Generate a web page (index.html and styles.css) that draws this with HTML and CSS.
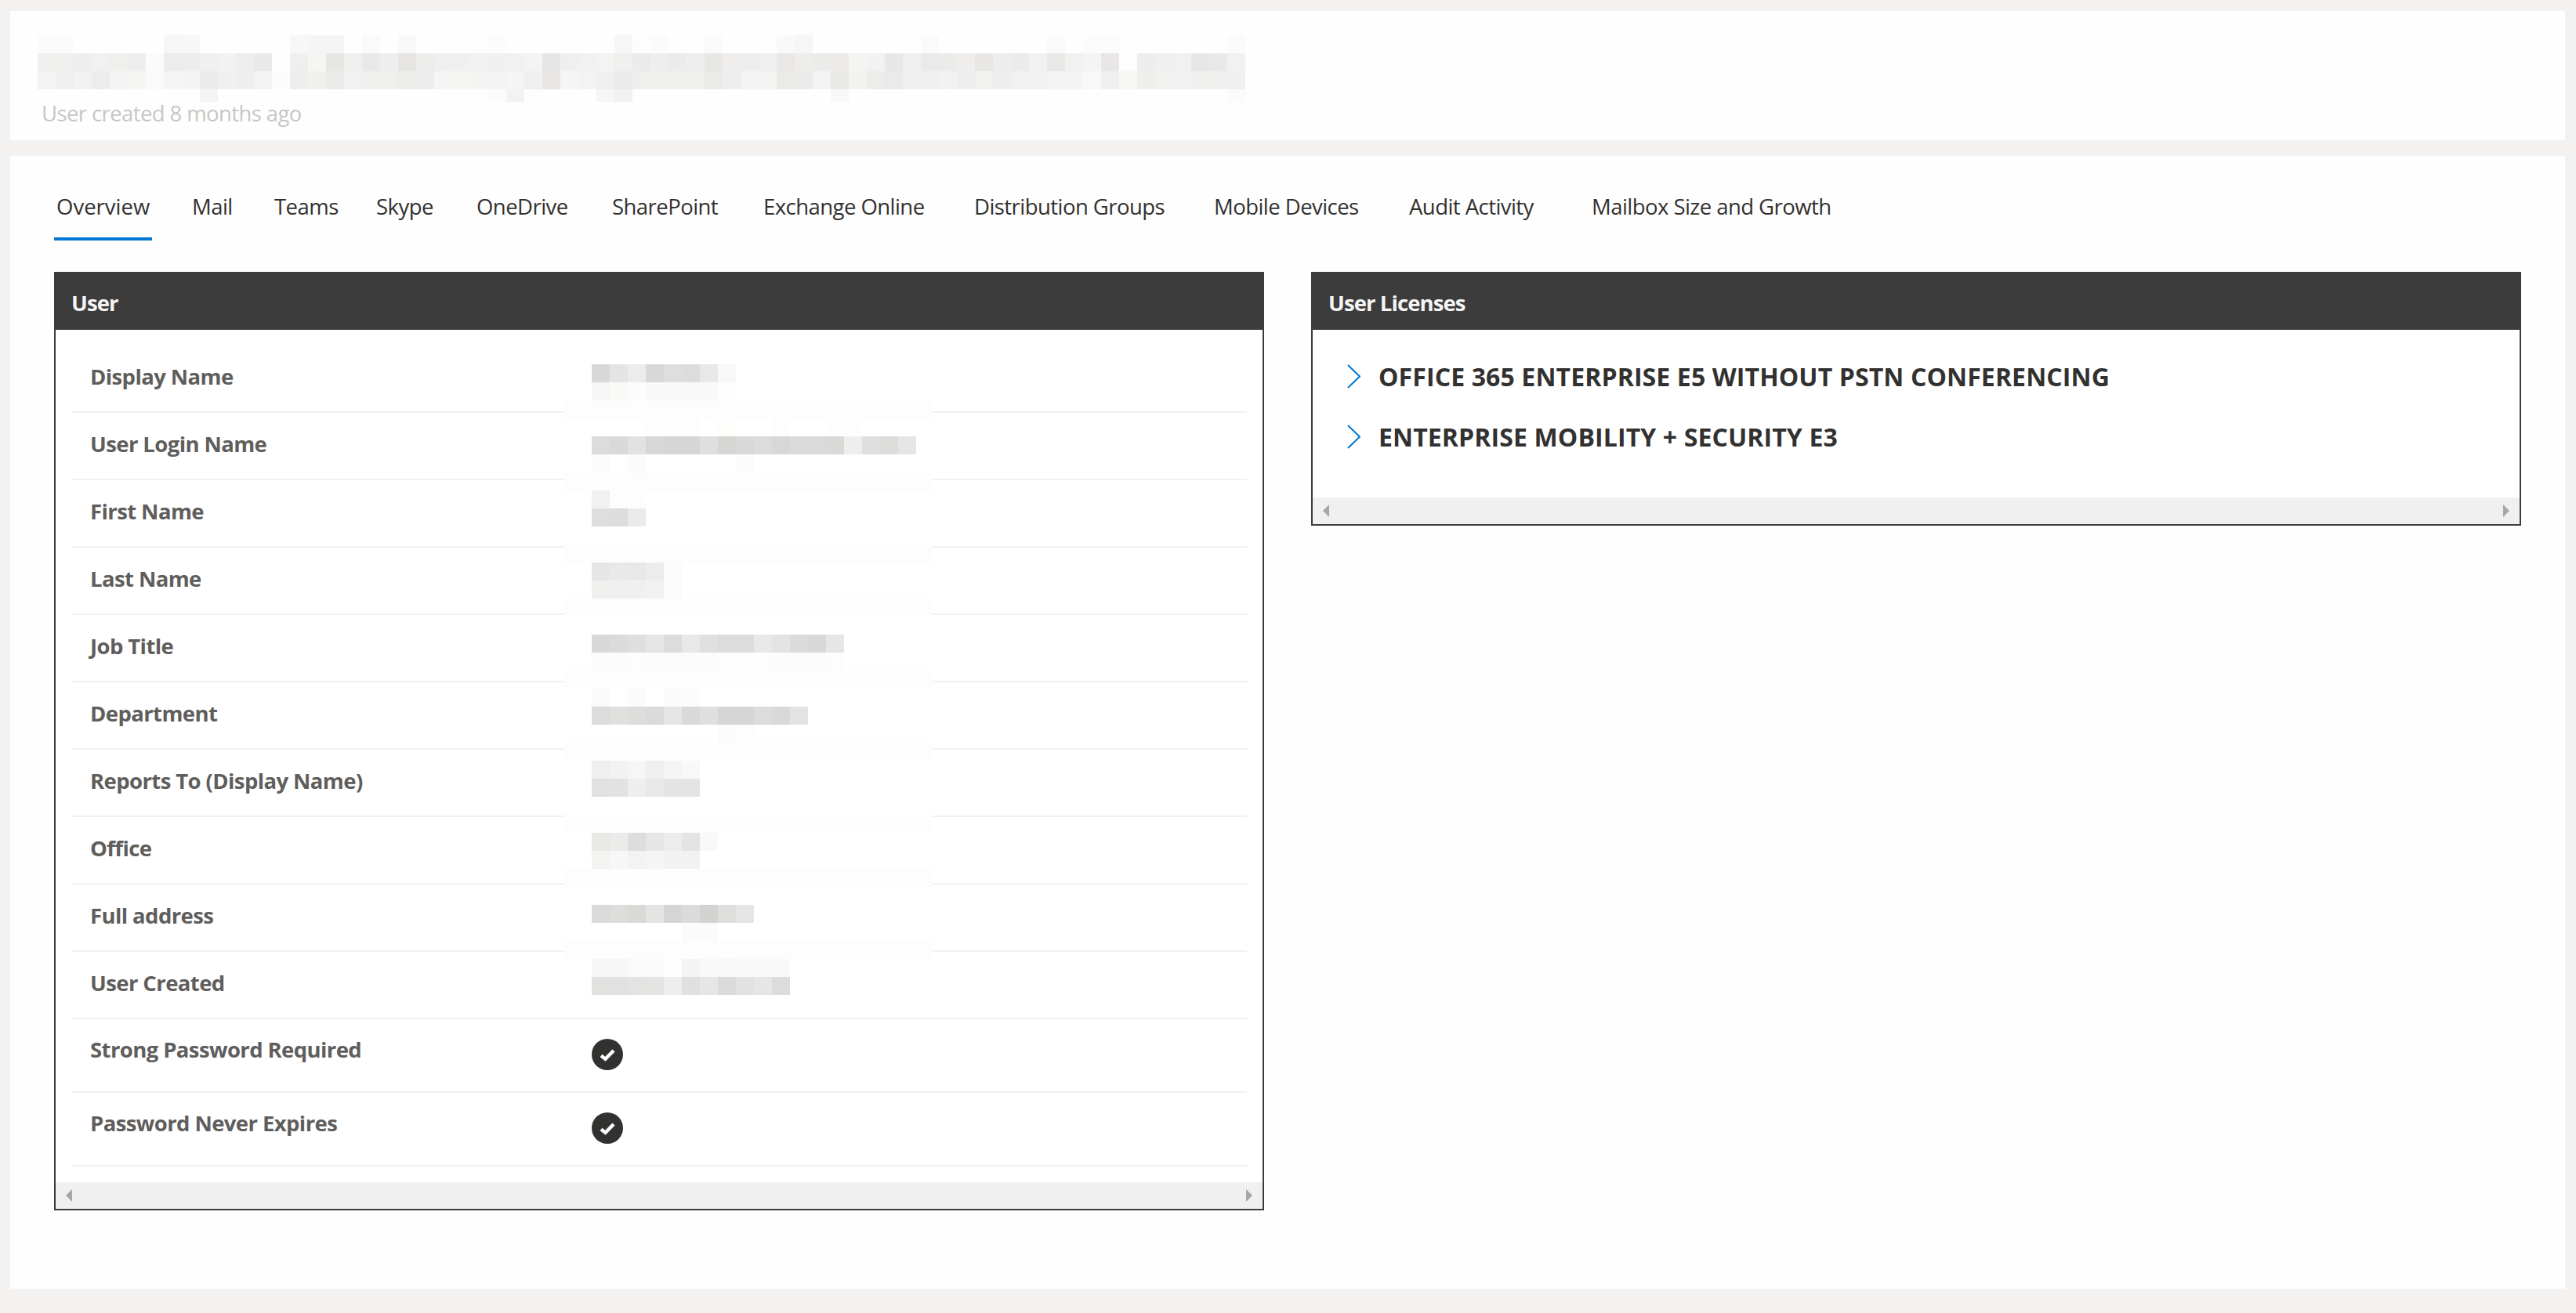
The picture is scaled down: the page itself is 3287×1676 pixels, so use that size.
FILE: index.html
```html
<!DOCTYPE html>
<html lang="en">
<head>
<meta charset="utf-8">
<title>User Overview</title>
<link rel="stylesheet" href="styles.css">
</head>
<body>
<header class="card user-head">
<svg class="mosaic title-mosaic" viewBox="0 0 1541 85" aria-label="Redacted user name">
<g>
<rect x="0" fill="#fbfbfb"/><rect x="23" fill="#fbfbfb"/><rect x="161" fill="#f6f6f6"/><rect x="184" fill="#f7f7f7"/><rect x="322" fill="#f7f7f7"/><rect x="345" fill="#f5f5f5"/><rect x="368" fill="#f5f5f5"/><rect x="414" fill="#fafafa"/><rect x="460" fill="#f9f9f9"/><rect x="552" fill="#fdfdfd"/><rect x="575" fill="#fcfcfc"/><rect x="736" fill="#f6f6f6"/><rect x="759" fill="#fdfdfd"/><rect x="782" fill="#fbfbfb"/><rect x="851" fill="#fafafa"/><rect x="943" fill="#f9f9f9"/><rect x="966" fill="#f6f6f6"/><rect x="1127" fill="#fafafa"/><rect x="1288" fill="#fafaf8"/><rect x="1334" fill="#fcfcfc"/><rect x="1357" fill="#fcfcfc"/><rect x="1518" fill="#fbfbfb"/>
</g>
<g transform="translate(0 23)">
<rect x="0" fill="#efefed"/><rect x="23" fill="#f0f0ee"/><rect x="46" fill="#eeeeee"/><rect x="69" fill="#f1f1f1"/><rect x="92" fill="#efefed"/><rect x="115" fill="#eeeeee"/><rect x="138" fill="#fbfbfb"/><rect x="161" fill="#ececea"/><rect x="184" fill="#ededed"/><rect x="207" fill="#f0f0f0"/><rect x="230" fill="#f2f2f2"/><rect x="253" fill="#eeeeec"/><rect x="276" fill="#e9e9e9"/><rect x="322" fill="#f0efed"/><rect x="345" fill="#f5f5f3"/><rect x="368" fill="#e7e6e4"/><rect x="391" fill="#f0f0ee"/><rect x="414" fill="#e9e9e9"/><rect x="437" fill="#eeeeee"/><rect x="460" fill="#e6e5e3"/><rect x="483" fill="#ededeb"/><rect x="506" fill="#efefef"/><rect x="529" fill="#f0f0f0"/><rect x="552" fill="#f2f2f0"/><rect x="575" fill="#f0f0f0"/><rect x="598" fill="#f1f1ef"/><rect x="621" fill="#f4f4f4"/><rect x="644" fill="#e6e6e6"/><rect x="667" fill="#efefef"/><rect x="690" fill="#f1f1f1"/><rect x="713" fill="#f3f3f1"/><rect x="736" fill="#f0f0ee"/><rect x="759" fill="#ebebeb"/><rect x="782" fill="#eeeeee"/><rect x="805" fill="#ebebe9"/><rect x="828" fill="#eeeeee"/><rect x="851" fill="#e8e7e5"/><rect x="874" fill="#efeeec"/><rect x="897" fill="#eeeeee"/><rect x="920" fill="#f0f0f0"/><rect x="943" fill="#e9e8e6"/><rect x="966" fill="#eeedeb"/><rect x="989" fill="#ebebe9"/><rect x="1012" fill="#ecebe9"/><rect x="1035" fill="#f4f4f2"/><rect x="1058" fill="#f2f2f2"/><rect x="1081" fill="#e7e7e7"/><rect x="1104" fill="#efefed"/><rect x="1127" fill="#eaeaea"/><rect x="1150" fill="#ebebe9"/><rect x="1173" fill="#efeeec"/><rect x="1196" fill="#e8e7e5"/><rect x="1219" fill="#ededed"/><rect x="1242" fill="#ecebe9"/><rect x="1265" fill="#f1f1f1"/><rect x="1288" fill="#e8e8e6"/><rect x="1311" fill="#f1f1ef"/><rect x="1334" fill="#f4f4f4"/><rect x="1357" fill="#e8e7e5"/><rect x="1380" fill="#fdfdfd"/><rect x="1403" fill="#ededed"/><rect x="1426" fill="#f0f0f0"/><rect x="1449" fill="#f1f1ef"/><rect x="1472" fill="#e7e7e7"/><rect x="1495" fill="#e9e9e7"/><rect x="1518" fill="#f1f1f1"/>
</g>
<g transform="translate(0 46)">
<rect x="0" fill="#f3f3f1"/><rect x="23" fill="#efefef"/><rect x="46" fill="#f2f2f0"/><rect x="69" fill="#ececec"/><rect x="92" fill="#f4f4f4"/><rect x="115" fill="#f5f5f3"/><rect x="138" fill="#fafafa"/><rect x="161" fill="#f5f5f3"/><rect x="184" fill="#f4f4f4"/><rect x="207" fill="#ebebe9"/><rect x="230" fill="#f0f0f0"/><rect x="253" fill="#eeeeee"/><rect x="276" fill="#f3f3f3"/><rect x="299" fill="#fcfcfc"/><rect x="322" fill="#eeeeec"/><rect x="345" fill="#f0f0ee"/><rect x="368" fill="#ebebe9"/><rect x="391" fill="#f1f1f1"/><rect x="414" fill="#f0f0ee"/><rect x="437" fill="#efefed"/><rect x="460" fill="#ededeb"/><rect x="483" fill="#ededed"/><rect x="506" fill="#f5f5f3"/><rect x="529" fill="#f5f5f3"/><rect x="552" fill="#f4f4f2"/><rect x="575" fill="#f3f3f3"/><rect x="598" fill="#f5f5f3"/><rect x="621" fill="#efefef"/><rect x="644" fill="#e8e7e5"/><rect x="667" fill="#f5f5f5"/><rect x="690" fill="#f3f3f3"/><rect x="713" fill="#efefef"/><rect x="736" fill="#ebebeb"/><rect x="759" fill="#efefed"/><rect x="782" fill="#f0f0ee"/><rect x="805" fill="#f0f0ee"/><rect x="828" fill="#f0f0ee"/><rect x="851" fill="#ebebe9"/><rect x="874" fill="#eeeeee"/><rect x="897" fill="#f4f4f4"/><rect x="920" fill="#f4f4f2"/><rect x="943" fill="#ebeae8"/><rect x="966" fill="#ebebe9"/><rect x="989" fill="#f3f3f3"/><rect x="1012" fill="#e9e9e7"/><rect x="1035" fill="#f2f2f0"/><rect x="1058" fill="#edecea"/><rect x="1081" fill="#eaeaea"/><rect x="1104" fill="#f0f0f0"/><rect x="1127" fill="#f0f0f0"/><rect x="1150" fill="#f2f2f2"/><rect x="1173" fill="#eeeeee"/><rect x="1196" fill="#f1f1ef"/><rect x="1219" fill="#eeeeee"/><rect x="1242" fill="#f1f1ef"/><rect x="1265" fill="#f1f1f1"/><rect x="1288" fill="#f4f4f4"/><rect x="1311" fill="#f4f4f4"/><rect x="1334" fill="#f8f8f8"/><rect x="1357" fill="#efefef"/><rect x="1380" fill="#f7f7f5"/><rect x="1403" fill="#efeeec"/><rect x="1426" fill="#f1f1ef"/><rect x="1449" fill="#f1f1f1"/><rect x="1472" fill="#f0f0ee"/><rect x="1495" fill="#f0f0ee"/><rect x="1518" fill="#f0f0f0"/>
</g>
<g transform="translate(0 69)">
<rect x="184" fill="#fdfdfd"/><rect x="207" fill="#f4f4f4"/><rect x="552" fill="#fdfdfd"/><rect x="575" fill="#fbfbfb"/><rect x="598" fill="#f3f3f3"/><rect x="621" fill="#fdfdfd"/><rect x="713" fill="#f6f6f4"/><rect x="736" fill="#f1f1f1"/><rect x="1012" fill="#f8f8f8"/><rect x="1518" fill="#fbfbfb"/>
</g>
</svg>
<p class="user-age">User created 8 months ago</p>
</header>

<main class="card user-body">
<nav class="tabs">
<a class="tab tab-active">Overview</a>
<a class="tab">Mail</a>
<a class="tab">Teams</a>
<a class="tab">Skype</a>
<a class="tab">OneDrive</a>
<a class="tab">SharePoint</a>
<a class="tab">Exchange Online</a>
<a class="tab">Distribution Groups</a>
<a class="tab">Mobile Devices</a>
<a class="tab">Audit Activity</a>
<a class="tab">Mailbox Size and Growth</a>
</nav>

<div class="panels">
<section class="panel panel-user">
<h2 class="panel-title">User</h2>
<div class="panel-scroll">
<dl class="fields">
<div class="field"><dt>Display Name</dt><dd></dd></div>
<div class="field"><dt>User Login Name</dt><dd></dd></div>
<div class="field"><dt>First Name</dt><dd></dd></div>
<div class="field"><dt>Last Name</dt><dd></dd></div>
<div class="field"><dt>Job Title</dt><dd></dd></div>
<div class="field"><dt>Department</dt><dd></dd></div>
<div class="field"><dt>Reports To (Display Name)</dt><dd></dd></div>
<div class="field"><dt>Office</dt><dd></dd></div>
<div class="field"><dt>Full address</dt><dd></dd></div>
<div class="field"><dt>User Created</dt><dd></dd></div>
<div class="field field-flag"><dt>Strong Password Required</dt><dd>
<svg class="check" viewBox="0 0 40 40"><circle cx="20" cy="20" r="20"/><path d="M12 21.500l5.500 4.300L28 15"/></svg>
</dd></div>
<div class="field field-flag"><dt>Password Never Expires</dt><dd>
<svg class="check" viewBox="0 0 40 40"><circle cx="20" cy="20" r="20"/><path d="M12 21.500l5.500 4.300L28 15"/></svg>
</dd></div>
</dl>
</div>
<div class="scrollbar"><span class="arrow arrow-left"></span><span class="arrow arrow-right"></span></div>

<svg class="mosaic field-mosaic" viewBox="0 0 470 805" aria-label="Redacted values">
<g transform="translate(0 46)"><rect class="band"/></g>
<g transform="translate(0 138)"><rect class="band"/></g>
<g transform="translate(0 230)"><rect class="band"/></g>
<g transform="translate(0 299)"><rect class="band"/></g>
<g transform="translate(0 391)"><rect class="band"/></g>
<g transform="translate(0 483)"><rect class="band"/></g>
<g transform="translate(0 575)"><rect class="band"/></g>
<g transform="translate(0 644)"><rect class="band"/></g>
<g transform="translate(0 736)"><rect class="band"/></g>

<g transform="translate(35 0)"><rect x="0" fill="#d8d8d8"/><rect x="23" fill="#e4e4e4"/><rect x="46" fill="#ececec"/><rect x="69" fill="#d8d8d8"/><rect x="92" fill="#dededc"/><rect x="115" fill="#dcdcdc"/><rect x="138" fill="#e8e8e6"/><rect x="161" fill="#f8f8f8"/></g>
<g transform="translate(35 23)"><rect x="0" fill="#f6f6f6"/><rect x="23" fill="#f9f9f7"/><rect x="46" fill="#fcfcfc"/><rect x="69" fill="#f9f9f9"/><rect x="92" fill="#f9f9f9"/><rect x="115" fill="#f9f9f9"/><rect x="138" fill="#f9f9f9"/><rect x="161" fill="#fdfdfd"/></g>

<g transform="translate(35 69)"><rect x="69" fill="#fdfdfd"/><rect x="92" fill="#fdfdfd"/><rect x="115" fill="#fdfdfd"/><rect x="161" fill="#fdfdfb"/><rect x="230" fill="#fdfdfd"/><rect x="299" fill="#fdfdfd"/><rect x="322" fill="#fdfdfd"/></g>
<g transform="translate(35 92)"><rect x="0" fill="#dcdcdc"/><rect x="23" fill="#d9d9d9"/><rect x="46" fill="#e2e2e2"/><rect x="69" fill="#d7d7d7"/><rect x="92" fill="#d6d6d6"/><rect x="115" fill="#d6d6d6"/><rect x="138" fill="#dfdfdf"/><rect x="161" fill="#d6d6d4"/><rect x="184" fill="#d9d9d9"/><rect x="207" fill="#dcdcdc"/><rect x="230" fill="#d7d7d5"/><rect x="253" fill="#dadada"/><rect x="276" fill="#dadada"/><rect x="299" fill="#d9d9d7"/><rect x="322" fill="#eeeeec"/><rect x="345" fill="#dfdfdf"/><rect x="368" fill="#dcdcda"/><rect x="391" fill="#e5e5e5"/></g>
<g transform="translate(35 115)"><rect x="0" fill="#fcfcfc"/><rect x="23" fill="#ffffff"/><rect x="46" fill="#fbfbfb"/><rect x="184" fill="#fcfcfc"/></g>

<g transform="translate(35 161)"><rect x="0" fill="#f1f1f1"/><rect x="23" fill="#fdfdfd"/><rect x="46" fill="#fdfdfd"/></g>
<g transform="translate(35 184)"><rect x="0" fill="#dedede"/><rect x="23" fill="#dddddd"/><rect x="46" fill="#ebebe9"/></g>

<g transform="translate(35 253)"><rect x="0" fill="#e6e6e6"/><rect x="23" fill="#e9e9e9"/><rect x="46" fill="#e8e8e6"/><rect x="69" fill="#ececec"/><rect x="92" fill="#fcfcfa"/></g>
<g transform="translate(35 276)"><rect x="0" fill="#f0f0ee"/><rect x="23" fill="#f0f0f0"/><rect x="46" fill="#f0f0f0"/><rect x="69" fill="#f2f2f2"/><rect x="92" fill="#fcfcfc"/></g>

<g transform="translate(35 345)"><rect x="0" fill="#d8d8d8"/><rect x="23" fill="#dbdbdb"/><rect x="46" fill="#dfdfdf"/><rect x="69" fill="#e5e5e3"/><rect x="92" fill="#dcdcdc"/><rect x="115" fill="#e8e8e8"/><rect x="138" fill="#e0e0e0"/><rect x="161" fill="#dcdcdc"/><rect x="184" fill="#dcdcdc"/><rect x="207" fill="#e8e8e6"/><rect x="230" fill="#e3e3e3"/><rect x="253" fill="#dbdbdb"/><rect x="276" fill="#d8d8d8"/><rect x="299" fill="#e6e6e6"/></g>
<g transform="translate(35 368)"><rect x="0" fill="#fcfcfc"/><rect x="23" fill="#fcfcfc"/><rect x="46" fill="#fdfdfd"/><rect x="69" fill="#fcfcfc"/><rect x="92" fill="#fcfcfc"/><rect x="115" fill="#fcfcfc"/><rect x="138" fill="#fcfcfc"/><rect x="161" fill="#fdfdfd"/><rect x="184" fill="#fdfdfd"/><rect x="207" fill="#fdfdfd"/><rect x="230" fill="#fcfcfc"/><rect x="253" fill="#fcfcfc"/><rect x="276" fill="#fcfcfc"/><rect x="299" fill="#fdfdfd"/></g>

<g transform="translate(35 414)"><rect x="0" fill="#fafafa"/><rect x="23" fill="#ffffff"/><rect x="46" fill="#fbfbfb"/><rect x="69" fill="#ffffff"/><rect x="92" fill="#fbfbfb"/><rect x="115" fill="#fcfcfc"/></g>
<g transform="translate(35 437)"><rect x="0" fill="#dcdcdc"/><rect x="23" fill="#e0e0de"/><rect x="46" fill="#dddddb"/><rect x="69" fill="#dadada"/><rect x="92" fill="#e5e5e5"/><rect x="115" fill="#d9d9d9"/><rect x="138" fill="#dfdfdd"/><rect x="161" fill="#d6d6d6"/><rect x="184" fill="#d6d6d6"/><rect x="207" fill="#dcdcdc"/><rect x="230" fill="#d9d9d9"/><rect x="253" fill="#e3e3e3"/></g>
<g transform="translate(35 460)"><rect x="161" fill="#fcfcfc"/><rect x="184" fill="#fdfdfd"/></g>

<g transform="translate(35 506)"><rect x="0" fill="#efefef"/><rect x="23" fill="#f2f2f2"/><rect x="46" fill="#f6f6f6"/><rect x="69" fill="#efefef"/><rect x="92" fill="#f5f5f5"/><rect x="115" fill="#f8f8f8"/></g>
<g transform="translate(35 529)"><rect x="0" fill="#e1e1e1"/><rect x="23" fill="#e2e2e2"/><rect x="46" fill="#eeeeee"/><rect x="69" fill="#e9e9e7"/><rect x="92" fill="#e4e4e4"/><rect x="115" fill="#e4e4e4"/></g>

<g transform="translate(35 598)"><rect x="0" fill="#e8e8e6"/><rect x="23" fill="#ebebe9"/><rect x="46" fill="#dddddd"/><rect x="69" fill="#e6e6e4"/><rect x="92" fill="#ececec"/><rect x="115" fill="#e4e4e4"/><rect x="138" fill="#f9f9f9"/></g>
<g transform="translate(35 621)"><rect x="0" fill="#f3f3f1"/><rect x="23" fill="#f7f7f7"/><rect x="46" fill="#f3f3f3"/><rect x="69" fill="#f5f5f3"/><rect x="92" fill="#f2f2f2"/><rect x="115" fill="#f2f2f2"/></g>

<g transform="translate(35 690)"><rect x="0" fill="#dadada"/><rect x="23" fill="#dddddb"/><rect x="46" fill="#d9d9d7"/><rect x="69" fill="#e4e4e2"/><rect x="92" fill="#d5d5d5"/><rect x="115" fill="#dbdbdb"/><rect x="138" fill="#d3d3d1"/><rect x="161" fill="#dededc"/><rect x="184" fill="#e6e6e6"/></g>
<g transform="translate(35 713)"><rect x="115" fill="#fbfbfb"/><rect x="138" fill="#fbfbfb"/></g>

<g transform="translate(35 759)"><rect x="0" fill="#f6f6f6"/><rect x="23" fill="#f6f6f6"/><rect x="46" fill="#fafafa"/><rect x="69" fill="#fafafa"/><rect x="92" fill="#fdfdfd"/><rect x="115" fill="#f4f4f2"/><rect x="138" fill="#f9f9f9"/><rect x="161" fill="#f8f8f8"/><rect x="184" fill="#f9f9f9"/><rect x="207" fill="#f9f9f9"/><rect x="230" fill="#f9f9f9"/></g>
<g transform="translate(35 782)"><rect x="0" fill="#e1e1df"/><rect x="23" fill="#e1e1e1"/><rect x="46" fill="#e3e3e1"/><rect x="69" fill="#e4e4e2"/><rect x="92" fill="#eeeeee"/><rect x="115" fill="#e0e0de"/><rect x="138" fill="#e6e6e6"/><rect x="161" fill="#dadada"/><rect x="184" fill="#e2e2e2"/><rect x="207" fill="#e6e6e6"/><rect x="230" fill="#dcdcdc"/></g>
</svg>
</section>

<section class="panel panel-licenses">
<h2 class="panel-title">User Licenses</h2>
<div class="panel-scroll">
<ul class="licenses">
<li class="license"><svg class="chevron" viewBox="0 0 17 31"><path d="M1 1l15 14.500L1 30"/></svg>OFFICE 365 ENTERPRISE E5 WITHOUT PSTN CONFERENCING</li>
<li class="license"><svg class="chevron" viewBox="0 0 17 31"><path d="M1 1l15 14.500L1 30"/></svg>ENTERPRISE MOBILITY + SECURITY E3</li>
</ul>
</div>
<div class="scrollbar"><span class="arrow arrow-left"></span><span class="arrow arrow-right"></span></div>
</section>
</div>
</main>
</body>
</html>
```
FILE: styles.css
```css
* {
  box-sizing: border-box;
}

html,
body {
  height: 100%;
}

body {
  margin: 0;
  padding: 14px 14px 31px 13px;
  display: flex;
  flex-direction: column;
  gap: 20px;
  background: #f3f2f1;
  color: #323130;
  font-family: "Open Sans", "Liberation Sans", sans-serif;
  font-size: 27.5px;
}

.card {
  background: #fefefe;
}

.user-head {
  height: 165px;
  padding: 31px 0 0 35px;
}

.mosaic rect {
  width: 23px;
  height: 23px;
}

.mosaic .band {
  width: 470px;
  fill: #fdfdfd;
}

.title-mosaic {
  display: block;
  width: 1541px;
  height: 85px;
}

.user-age {
  margin: 0 0 0 5px;
  line-height: 30px;
  color: #c8c6c4;
  letter-spacing: -0.6px;
}

.user-body {
  flex: 1;
  padding: 46px 56px 0;
}

.tabs {
  display: grid;
  grid-template-columns: 176px 105px 130px 128px 173px 193px 269px 306px 249px 233px auto;
  line-height: 38px;
  letter-spacing: -0.55px;
  white-space: nowrap;
}

.tab {
  height: 62px;
}

.tab-active {
  width: 125px;
  padding-left: 3px;
  border-bottom: 4px solid #0078d4;
  letter-spacing: 0;
}

.panels {
  display: flex;
  align-items: flex-start;
  gap: 60px;
  margin-top: 40px;
}

.panel {
  position: relative;
  flex: 1;
  border: 2px solid #3c3c3c;
  background: #fff;
}

.panel-title {
  margin: 0;
  height: 72px;
  padding: 0 0 0 20px;
  background: #3c3c3c;
  color: #f5f5f5;
  font-size: 27.5px;
  font-weight: 700;
  letter-spacing: -0.9px;
  line-height: 75px;
}

.fields {
  margin: 0;
  padding: 20px 20px 20px;
}

.field {
  display: flex;
  align-items: center;
  height: 86px;
  padding-left: 24px;
  border-bottom: 2px solid #f1f1f1;
}

.field dt {
  width: 640px;
  padding-bottom: 5px;
  color: #605e5c;
  font-weight: 700;
  letter-spacing: -0.6px;
  line-height: 40px;
}

.field dd {
  margin: 0;
}

.field-flag {
  align-items: flex-start;
  height: 94px;
}

.field-flag dt {
  padding: 19px 0 0;
  box-sizing: border-box;
}

.field-flag dd {
  padding-top: 25px;
}

.check {
  display: block;
  width: 40px;
  height: 40px;
}

.check circle {
  fill: #323130;
}

.check path {
  fill: none;
  stroke: #fff;
  stroke-width: 4.5;
}

.scrollbar {
  display: flex;
  align-items: center;
  justify-content: space-between;
  height: 34px;
  padding: 0 13px;
  background: #f0f0f0;
}

.arrow {
  width: 0;
  height: 0;
  border-top: 8px solid transparent;
  border-bottom: 8px solid transparent;
}

.arrow-left {
  border-right: 8px solid #a6a6a6;
}

.arrow-right {
  border-left: 8px solid #a6a6a6;
}

.field-mosaic {
  position: absolute;
  left: 649px;
  top: 116px;
  width: 470px;
  height: 805px;
}

.licenses {
  list-style: none;
  margin: 0;
  padding: 21px 0 39px 44px;
}

.license {
  display: flex;
  align-items: center;
  gap: 23px;
  height: 77px;
  color: #323130;
  font-size: 32px;
  font-weight: 700;
  letter-spacing: 0.12px;
  white-space: nowrap;
}

.chevron {
  width: 17px;
  height: 31px;
  flex: none;
}

.chevron path {
  fill: none;
  stroke: #0078d4;
  stroke-width: 2;
}
```
